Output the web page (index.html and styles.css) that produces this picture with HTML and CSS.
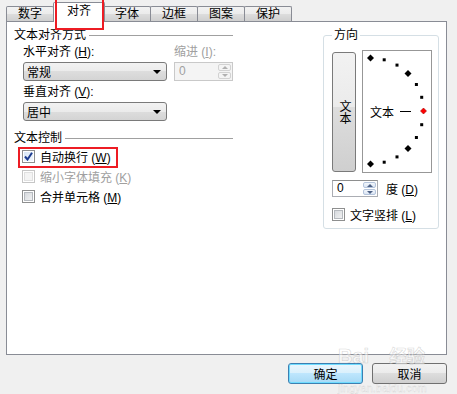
FILE: index.html
```
<!DOCTYPE html>
<html lang="zh-CN">
<head>
    <meta charset="UTF-8">
    <title>设置单元格格式</title>
    <link rel="stylesheet" href="styles.css">
</head>
<body>
    <div class="dialog">
        <!-- 选项卡 -->
        <div class="tabs">
            <div class="tab">数字</div>
            <div class="tab active">对齐</div>
            <div class="tab">字体</div>
            <div class="tab">边框</div>
            <div class="tab">图案</div>
            <div class="tab">保护</div>
        </div>

        <div class="panel">
            <div class="left">
                <div class="group-title">文本对齐方式</div>
                <div class="align-grid">
                    <span class="lbl">水平对齐 (<u>H</u>):</span>
                    <span class="lbl disabled">缩进 (<u>I</u>):</span>
                    <div class="combo">常规</div>
                    <div class="spin disabled">
                        <span class="val">0</span>
                        <div class="spin-btns"><i class="up"></i><i class="down"></i></div>
                    </div>
                    <span class="lbl lbl-second">垂直对齐 (<u>V</u>):</span>
                    <span></span>
                    <div class="combo">居中</div>
                </div>

                <div class="group-title second">文本控制</div>
                <div class="checks">
                    <div class="check">
                        <span class="box checked">
                            <svg width="9" height="9" viewBox="0 0 9 9"><path d="M1 4.5 L3.5 7.5 L8 0.8" fill="none" stroke="#1d3c8f" stroke-width="2"/></svg>
                        </span>
                        <span>自动换行 (<u>W</u>)</span>
                    </div>
                    <div class="check disabled"><span class="box"></span><span>缩小字体填充 (<u>K</u>)</span></div>
                    <div class="check"><span class="box"></span><span>合并单元格 (<u>M</u>)</span></div>
                </div>
            </div>

            <fieldset class="orient">
                <legend>方向</legend>
                <div class="orient-top">
                    <div class="vbtn">文本</div>
                    <div class="dial">
                        <svg width="68" height="121" viewBox="0 0 68 121">
                            <g fill="#000">
                                <polygon points="7.5,3.5 11,7 7.5,10.5 4,7"/>
                                <rect x="19.7" y="7.3" width="3" height="3"/>
                                <rect x="32.5" y="12.6" width="3" height="3"/>
                                <polygon points="45,19 48.5,22.5 45,26 41.5,22.5"/>
                                <rect x="51.9" y="32" width="3" height="3"/>
                                <rect x="57.2" y="44.8" width="3" height="3"/>
                                <rect x="57.2" y="72.2" width="3" height="3"/>
                                <rect x="51.9" y="85" width="3" height="3"/>
                                <polygon points="45,94 48.5,97.5 45,101 41.5,97.5"/>
                                <rect x="32.5" y="104.4" width="3" height="3"/>
                                <rect x="19.7" y="109.7" width="3" height="3"/>
                                <polygon points="7.5,109.5 11,113 7.5,116.5 4,113"/>
                            </g>
                            <polygon points="60.5,57 63.5,60 60.5,63 57.5,60" fill="#ff0000" stroke="#a00000" stroke-width="0.6"/>
                            <text x="7" y="60" dominant-baseline="central" class="dial-text">文本</text>
                            <line x1="37" y1="60.5" x2="48" y2="60.5" stroke="#000" stroke-width="1"/>
                        </svg>
                    </div>
                </div>
                <div class="degree-row">
                    <div class="spin">
                        <span class="val">0</span>
                        <div class="spin-btns"><i class="up"></i><i class="down"></i></div>
                    </div>
                    <span>度 (<u>D</u>)</span>
                </div>
                <div class="check vert"><span class="box"></span><span>文字竖排 (<u>L</u>)</span></div>
            </fieldset>
        </div>

        <div class="buttons">
            <button class="btn default">确定</button>
            <button class="btn">取消</button>
        </div>

        <!-- 红色标注框 -->
        <div class="mark mark-tab"></div>
        <div class="mark mark-wrap"></div>

        <div class="watermark">
            <div class="wm-line"><span class="wm-big">Bai</span><span class="wm-cn">经验</span></div>
            <div class="wm-url">jingyan.baidu.com</div>
        </div>
    </div>
</body>
</html>
```

FILE: styles.css
```
body {
    margin: 0;
    background-color: #f0f0f0;
}
.dialog {
    position: relative;
    width: 457px;
    height: 394px;
    padding-left: 6px;
    box-sizing: border-box;
    background-color: #f0f0f0;
    font-family: "Liberation Sans", "Noto Sans CJK SC", sans-serif;
    font-size: 12px;
    color: #000;
    overflow: hidden;
}
u {
    text-decoration: underline;
}
.disabled {
    color: #a0a0a0;
}

/* 选项卡 */
.tabs {
    display: flex;
    align-items: flex-end;
    height: 21px;
}
.tab {
    position: relative;
    width: 48px;
    height: 15px;
    box-sizing: border-box;
    margin-right: -1px;
    border: 1px solid #898c95;
    border-bottom: none;
    border-radius: 2px 2px 0 0;
    background: linear-gradient(#f2f2f2, #ebebeb 50%, #dddddd 50%, #cfcfcf);
    text-align: center;
    line-height: 14px;
}
.tab.active {
    z-index: 2;
    width: 52px;
    height: 20px;
    margin: 0 -2px -1px 0;
    background: #fff;
    line-height: 17px;
}

/* 主面板 */
.panel {
    display: flex;
    align-items: flex-start;
    width: 441px;
    height: 334px;
    box-sizing: border-box;
    padding: 6px 7px 0 7px;
    border: 1px solid #898c95;
    background-color: #fff;
}
.left {
    width: 219px;
}
.group-title {
    display: flex;
    align-items: center;
    height: 14px;
    line-height: 14px;
}
.group-title::after {
    content: "";
    flex: 1;
    margin-left: 3px;
    border-top: 1px solid #a0a0a0;
}
.group-title.second {
    margin-top: 10px;
}
.align-grid {
    display: grid;
    grid-template-columns: 144px 59px;
    column-gap: 7px;
    margin: 2px 0 0 9px;
}
.lbl {
    height: 16px;
    line-height: 16px;
    margin-bottom: 2px;
}
.lbl-second {
    margin-top: 3px;
}
.combo {
    display: flex;
    align-items: center;
    height: 19px;
    box-sizing: border-box;
    padding-left: 3px;
    border: 1px solid #7a7a7a;
    border-radius: 3px;
    background: linear-gradient(#f2f2f2, #ebebeb 50%, #dddddd 50%, #d4d4d4);
}
.combo::after {
    content: "";
    margin: 1px 5px 0 auto;
    border-left: 4px solid transparent;
    border-right: 4px solid transparent;
    border-top: 4px solid #000;
}

/* 微调框 */
.spin {
    display: flex;
    height: 19px;
    box-sizing: border-box;
    border: 1px solid #abadb3;
    border-top-color: #8e8f8f;
    background: #fff;
}
.spin .val {
    flex: 1;
    padding-left: 4px;
    line-height: 17px;
}
.spin-btns {
    display: flex;
    flex-direction: column;
    gap: 1px;
    width: 13px;
    padding: 1px;
}
.spin-btns i {
    display: flex;
    flex: 1;
    align-items: center;
    justify-content: center;
    border: 1px solid #b4c4dc;
    border-radius: 2px;
    background: linear-gradient(#f3f7fc, #dbe5f3);
}
.spin-btns .up::before {
    content: "";
    border-left: 3px solid transparent;
    border-right: 3px solid transparent;
    border-bottom: 3px solid #4d6185;
}
.spin-btns .down::before {
    content: "";
    border-left: 3px solid transparent;
    border-right: 3px solid transparent;
    border-top: 3px solid #4d6185;
}
.spin.disabled {
    border-color: #c9c9c9;
    background: #f4f4f4;
}
.spin.disabled .spin-btns i {
    border-color: #d2d2d2;
    background: #f4f4f4;
}
.spin.disabled .up::before {
    border-bottom-color: #b0b0b0;
}
.spin.disabled .down::before {
    border-top-color: #b0b0b0;
}

/* 复选框 */
.checks {
    margin: 1px 0 0 8px;
}
.check {
    display: flex;
    align-items: center;
    gap: 5px;
    height: 20px;
}
.box {
    display: flex;
    align-items: center;
    justify-content: center;
    width: 13px;
    height: 13px;
    box-sizing: border-box;
    border: 1px solid #8e8f8f;
    background: linear-gradient(135deg, #cfd3d8, #f7f7f7);
    box-shadow: inset 0 0 0 1px #fff, inset 0 0 0 2px #b5b9be;
}
.box.checked {
    background: linear-gradient(135deg, #d5e4f5, #f4f8fd);
    box-shadow: inset 0 0 0 1px #fff;
}
.check.disabled .box {
    border-color: #c6c6c6;
    background: #f4f4f4;
    box-shadow: inset 0 0 0 1px #fff, inset 0 0 0 2px #e0e0e0;
}

/* 方向 */
.orient {
    width: 116px;
    min-width: 0;
    box-sizing: border-box;
    margin: 0 0 0 auto;
    padding: 8px 8px 4px 8px;
    border: 1px solid #d5dfe5;
    border-radius: 3px;
}
.orient legend {
    padding: 0 2px;
    line-height: 14px;
}
.orient-top {
    display: flex;
    align-items: flex-start;
    gap: 6px;
}
.vbtn {
    display: flex;
    align-items: center;
    justify-content: center;
    width: 24px;
    height: 120px;
    box-sizing: border-box;
    margin-top: 2px;
    border: 1px solid #7a7a7a;
    border-radius: 3px;
    background: linear-gradient(#f2f2f2, #ebebeb 46%, #dddddd 46%, #cfcfcf);
    writing-mode: vertical-lr;
    line-height: 14px;
}
.dial {
    width: 70px;
    height: 123px;
    box-sizing: border-box;
    border: 1px solid #979797;
    background: #fff;
}
.dial svg {
    display: block;
}
.dial-text {
    font-family: "Noto Sans CJK SC", sans-serif;
    font-size: 12px;
}
.degree-row {
    display: flex;
    align-items: center;
    gap: 8px;
    margin-top: 7px;
}
.degree-row .spin {
    width: 46px;
    height: 17px;
}
.degree-row .spin .val {
    line-height: 15px;
}
.check.vert {
    margin-top: 7px;
}

/* 按钮 */
.buttons {
    display: flex;
    justify-content: flex-end;
    gap: 9px;
    width: 441px;
    margin-top: 8px;
}
.btn {
    width: 75px;
    height: 21px;
    padding: 0;
    border: 1px solid #707070;
    border-radius: 3px;
    background: linear-gradient(#f2f2f2, #ebebeb 50%, #dddddd 50%, #cfcfcf);
    font: inherit;
    color: #000;
}
.btn.default {
    border-color: #3c7fb1;
    background: linear-gradient(#eaf6fd, #d9f0fc 50%, #bee6fd 50%, #a7d9f5);
    box-shadow: inset 0 0 0 1px #6fdcff;
}

/* 红框标注 */
.mark {
    position: absolute;
    border: 2px solid #ed1c24;
    box-sizing: border-box;
}
.mark-tab {
    left: 55px;
    top: -2px;
    width: 49px;
    height: 32px;
    z-index: 3;
}
.mark-wrap {
    left: 18px;
    top: 147px;
    width: 100px;
    height: 21px;
}

/* 水印 */
.watermark {
    position: absolute;
    left: 338px;
    top: 345px;
    color: rgba(255, 255, 255, 0.5);
    -webkit-text-stroke: 0.6px rgba(175, 175, 175, 0.5);
    font-family: "Liberation Sans", sans-serif;
    white-space: nowrap;
}
.wm-line {
    height: 20px;
    line-height: 20px;
}
.wm-big {
    font-size: 20px;
    font-weight: bold;
}
.wm-cn {
    margin-left: 20px;
    font-family: "Noto Sans CJK SC", sans-serif;
    font-size: 18px;
    font-weight: bold;
}
.wm-url {
    margin-top: 17px;
    font-size: 11px;
    line-height: 12px;
    -webkit-text-stroke: 0.3px rgba(175, 175, 175, 0.5);
}
```
